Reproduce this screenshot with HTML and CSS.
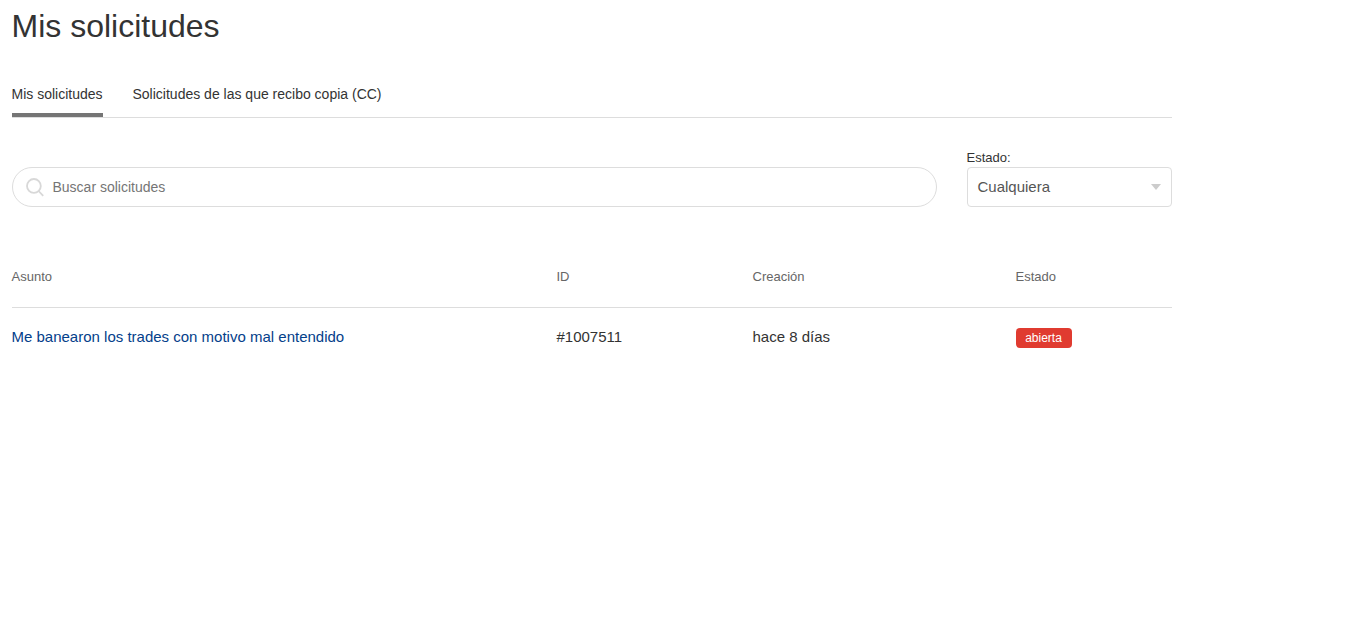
FILE: index.html
```html
<!DOCTYPE html>
<html lang="es">
<head>
<meta charset="utf-8">
<title>Mis solicitudes</title>
<link rel="stylesheet" href="styles.css">
</head>
<body>
<main class="page">
  <h1 class="title">Mis solicitudes</h1>
  <nav class="tabs">
    <a class="tab tab-active"><span class="tab-text">Mis solicitudes</span></a>
    <a class="tab"><span class="tab-text">Solicitudes de las que recibo copia (CC)</span></a>
  </nav>
  <div class="filters">
    <div class="search">
      <svg class="search-icon" viewBox="0 0 18 19" width="18" height="19" fill="none" stroke="#d8d8d8" stroke-width="1.8"><circle cx="7.9" cy="7.9" r="6.9"/><path d="M12.6 13L17.2 17.8"/></svg>
      <span>Buscar solicitudes</span>
    </div>
    <div class="status">
      <span class="status-label">Estado:</span>
      <div class="select"><span>Cualquiera</span><svg width="10" height="6" viewBox="0 0 10 6"><path d="M0 0h10L5 6z" fill="#ccc"/></svg></div>
    </div>
  </div>
  <div class="table">
    <div class="row head"><span>Asunto</span><span>ID</span><span>Creación</span><span>Estado</span></div>
    <div class="row body"><a class="link">Me banearon los trades con motivo mal entendido</a><span>#1007511</span><span>hace 8 días</span><b class="badge">abierta</b></div>
  </div>
</main>
</body>
</html>
```
FILE: styles.css
```css
* { box-sizing: border-box; }
body { margin: 0; background: #fff; color: #333; font: 15px/22px "Liberation Sans", Arial, sans-serif; }
.page { width: 1160px; margin-left: 12px; padding-top: 7px; }
.title { margin: 0 0 0 -0.5px; font-size: 32px; line-height: 38px; font-weight: 400; }
.tabs { display: flex; gap: 30px; height: 73px; padding-top: 38px; border-bottom: 1px solid #ddd; font-size: 14px; }
.tab { height: 34px; color: #333; }
.tab-text { margin-left: -0.5px; }
.tab-active { width: 91px; white-space: nowrap; border-bottom: 4px solid #757575; }
.filters { display: flex; gap: 30px; align-items: flex-end; margin-top: 31px; height: 58px; }
.search { display: flex; align-items: center; width: 925px; height: 40px; padding-left: 13px; gap: 8.5px; border: 1px solid #ddd; border-radius: 20px; color: #757575; font-size: 14px; }
.status { display: flex; flex-direction: column; width: 205px; }
.status-label { margin-left: -0.5px; font-size: 13px; line-height: 18px; }
.select { display: flex; align-items: center; justify-content: space-between; height: 40px; padding: 0 10px 0 9.5px; border: 1px solid #ddd; border-radius: 4px; color: #555; }
.table { margin-top: 38px; }
.row { display: grid; grid-template-columns: 545px 196px 263px 156px; align-items: center; }
.row > span, .link { margin-left: -0.5px; }
.head { height: 63px; padding-top: 2px; border-bottom: 1px solid #ddd; color: #666; font-size: 13px; }
.body { height: 60px; }
.body > span, .link { padding-bottom: 2px; }
.link { color: #04408a; }
.badge { width: 56px; height: 20px; padding-right: 1px; border-radius: 4px; background: #e03b30; color: #fff; font-size: 12px; font-weight: 400; line-height: 20px; text-align: center; }
```
